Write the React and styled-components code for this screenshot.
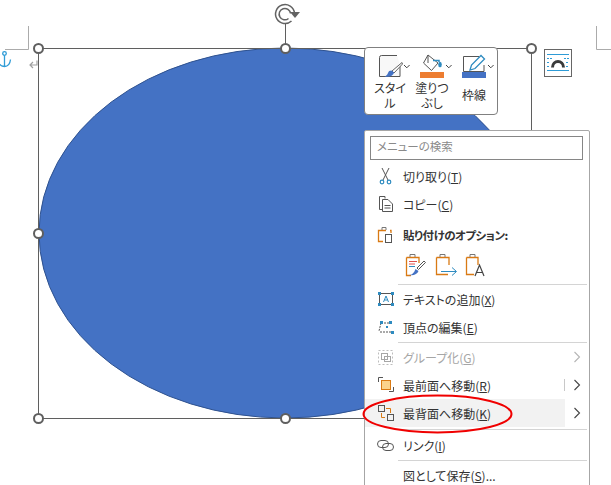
import React from "react";
import styled, { createGlobalStyle } from "styled-components";

const Global = createGlobalStyle`
	html, body {
		margin: 0;
		padding: 0;
		background: #fff;
		overflow: hidden;
	}
	body {
		font-family: "Noto Sans CJK JP", "Liberation Sans", sans-serif;
		font-feature-settings: "palt";
		color: #262626;
	}
`;

const Stage = styled.div`
	position: relative;
	width: 611px;
	height: 485px;
	overflow: hidden;
	background: #fff;
`;

const Drawing = styled.svg`
	position: absolute;
	left: 0;
	top: 0;
`;

const MiniToolbar = styled.div`
	position: absolute;
	left: 364px;
	top: 47px;
	width: 134px;
	height: 68px;
	box-sizing: border-box;
	background: #fff;
	border: 1px solid #808080;
	border-radius: 4px;
	display: flex;
	padding: 4px 0 0 4px;
`;

const ToolButton = styled.div`
	width: 42px;
	display: flex;
	flex-direction: column;
	align-items: center;
`;

const ToolLabel = styled.div`
	font-size: 12px;
	line-height: 15px;
	text-align: center;
	white-space: pre-line;
	margin-top: ${(p) => p.$top || 0}px;
	color: #333;
`;

const Menu = styled.div`
	position: absolute;
	left: 364px;
	top: 130px;
	width: 226px;
	height: 360px;
	box-sizing: border-box;
	background: #fff;
	border: 1px solid #a6a6a6;
	border-radius: 2px 2px 0 0;
	display: flex;
	flex-direction: column;
	padding-top: 5px;
`;

const SearchBox = styled.div`
	height: 24px;
	margin: 0 6px 2px 5px;
	box-sizing: border-box;
	border: 1px solid #868686;
	font-size: 11.5px;
	line-height: 18px;
	padding-left: 6px;
	color: #8a8a8a;
	flex: none;
`;

const Row = styled.div`
	height: ${(p) => p.$h || 28}px;
	flex: none;
	display: flex;
	align-items: center;
	font-size: ${(p) => (p.$bold ? 11.5 : 12)}px;
	letter-spacing: ${(p) => (p.$bold ? "-0.5px" : "normal")};
	color: ${(p) => (p.$disabled ? "#a6a6a6" : "#333")};
	font-weight: ${(p) => (p.$bold ? 700 : 400)};
`;

const Highlight = styled.div`
	display: flex;
	align-items: center;
	height: 100%;
	width: 200px;
	flex: none;
	position: relative;
	background: ${(p) => (p.$on ? "#f2f2f2" : "transparent")};
	box-sizing: border-box;

	${(p) =>
		p.$split &&
		`&::after {
			content: "";
			position: absolute;
			right: 0;
			top: 8px;
			bottom: 8px;
			width: 1px;
			background: #c8c8c8;
		}`}
`;

const IconCell = styled.div`
	width: 38px;
	height: 100%;
	flex: none;
	display: flex;
	align-items: center;
	padding-left: 12px;
	box-sizing: border-box;
`;

const Key = styled.span`
	text-decoration: underline;
	text-underline-offset: 1px;
`;

const Chevron = styled.div`
	width: 24px;
	display: flex;
	justify-content: center;
	flex: none;
`;

const Separator = styled.div`
	height: 1px;
	flex: none;
	margin-left: 33px;
	margin-right: 2px;
	background: #d4d4d4;
	margin-top: ${(p) => p.$top || 0}px;
	margin-bottom: ${(p) => p.$bottom || 0}px;
`;

const PasteIcons = styled.div`
	height: 26px;
	flex: none;
	display: flex;
	gap: 7px;
	padding-left: 40px;
	align-items: center;
`;

const Ico = ({ w = 18, h = 18, children }) => (
	<svg width={w} height={h} viewBox={`0 0 ${w} ${h}`} fill="none" style={{ display: "block" }}>
		{children}
	</svg>
);

const ChevronIcon = ({ color = "#444" }) => (
	<svg width="8" height="12" viewBox="0 0 8 12" fill="none">
		<path d="M1.500 1l5 5-5 5" stroke={color} strokeWidth="1.100" />
	</svg>
);

const handles = [
	[38.5, 48.5], [285.5, 48.5], [531.5, 48.5], [38.5, 233.5], [38.5, 418.5], [285.5, 418.5],
];

const Canvas = () => (
	<Drawing width="611" height="485" viewBox="0 0 611 485" fill="none">
		<path d="M5 49.500H28.500V26" stroke="#ababab" />
		<path d="M596.500 26V49.500H611" stroke="#ababab" />
		<ellipse cx="285" cy="233" rx="246" ry="185" fill="#4472c4" stroke="#2f528f" />
		<rect x="38.500" y="48.500" width="493" height="370" stroke="#5f5f5f" />
		<path d="M285.500 24V48" stroke="#5f5f5f" />
		{handles.map(([x, y]) => (
			<circle key={`${x}-${y}`} cx={x} cy={y} r="4.500" fill="#fff" stroke="#5f5f5f" strokeWidth="2" />
		))}
		{/* rotate handle */}
		<path d="M294.500 13a9.500 9.500 0 1 0-3 8M290.500 13.500a5.700 5.700 0 1 0-2 5" stroke="#636363" strokeWidth="1.500" />
		<path d="M290 12h10l-5 6z" fill="#636363" />
		{/* anchor */}
		<g stroke="#2e9bd6" strokeWidth="1.300">
			<circle cx="4.500" cy="53.500" r="1.800" />
			<path d="M4.500 55.500V66.500M-1.500 60c0 4 2.500 6.500 6 6.500s5.500-2.500 6-7" />
		</g>
		{/* paragraph mark */}
		<path d="M37 60.500V65H30M33 62l-3 3 3 3" stroke="#a0a0a0" strokeWidth="1.200" />
		{/* layout options */}
		<rect x="544.500" y="49.500" width="27" height="27" fill="#fff" stroke="#666" />
		<g stroke="#2e9bd6">
			<path d="M547 54.500H569M547 70.500H569" />
			<path d="M547 58.500h5M547 62.500h3M547 66.500h3M564 58.500h5M566 62.500h3M566 66.500h3" strokeDasharray="2 1" />
		</g>
		<path d="M552.500 67.500c0-8 11-8 11 0" stroke="#3a3a3a" strokeWidth="3" />
	</Drawing>
);

const Caret = ({ x }) => <path d={`M${x} 13l2.800 2.800L${x + 5.600} 13`} stroke="#444" />;

const Toolbar = () => (
	<MiniToolbar>
		<ToolButton>
			<Ico w={42} h={28}>
				<path d="M28 3.500H12.500a2 2 0 0 0-2 2V24.500H31V13" stroke="#555" fill="#f8f8f8" />
				<path d="M33 10.500L23 19l2 2 8.500-9z" fill="#fff" stroke="#666" />
				<path d="M22.500 18.500c-2 0-3 .8-3.500 2.500-.6 2-2 3-3.500 3.500 4 1 9-.6 9.500-4z" fill="#4472c4" />
				<Caret x={35} />
			</Ico>
			<ToolLabel>{"スタイ\nル"}</ToolLabel>
		</ToolButton>
		<ToolButton>
			<Ico w={42} h={28}>
				<path d="M17 3l-4.500 8 8 7.500L27 11z" stroke="#555" />
				<path d="M17 3v8" stroke="#555" />
				<path d="M22 8.500h6v1.500" stroke="#2e8bc0" strokeWidth="1.500" />
				<ellipse cx="29" cy="12.500" rx="1.800" ry="2.800" fill="#2e8bc0" />
				<rect x="9" y="20" width="24" height="6" fill="#ed7d31" />
				<Caret x={35} />
			</Ico>
			<ToolLabel>{"塗りつ\nぶし"}</ToolLabel>
		</ToolButton>
		<ToolButton>
			<Ico w={42} h={28}>
				<path d="M26 4.500H10.500V19.500H31V13" stroke="#555" />
				<path d="M17 18l1.500-5L28 3.500l3.500 3.500-9.500 9.500z" fill="#fff" stroke="#2e8bc0" strokeWidth="1.300" />
				<rect x="9" y="20" width="24" height="6" fill="#4472c4" />
				<Caret x={35} />
			</Ico>
			<ToolLabel $top={7}>枠線</ToolLabel>
		</ToolButton>
	</MiniToolbar>
);

const Item = ({ icon, label, k, suffix = "", disabled, arrow, hover, split }) => (
	<Row $disabled={disabled}>
		<Highlight $on={hover} $split={split}>
			<IconCell>{icon}</IconCell>
			<span>
				{label}(<Key>{k}</Key>){suffix}
			</span>
		</Highlight>
		{arrow && (
			<Chevron>
				<ChevronIcon color={disabled ? "#b5b5b5" : "#444"} />
			</Chevron>
		)}
	</Row>
);

const ContextMenu = () => (
	<Menu>
		<SearchBox>メニューの検索</SearchBox>
		<Item
			label="切り取り"
			k="T"
			icon={
				<Ico>
					<path d="M5 1l6 12M12 1L6 13" stroke="#555" />
					<circle cx="5" cy="15" r="1.800" stroke="#2e8bc0" strokeWidth="1.200" />
					<circle cx="12" cy="15" r="1.800" stroke="#2e8bc0" strokeWidth="1.200" />
				</Ico>
			}
		/>
		<Item
			label="コピー"
			k="C"
			icon={
				<Ico>
					<path d="M8 3.500V1.500H2.500V14.500H5" stroke="#555" />
					<path d="M5.500 4.500H11L15.500 9V16.500H5.500zM7.500 10.500h6M7.500 13h6" stroke="#555" />
				</Ico>
			}
		/>
		<Row $bold $h={34}>
			<IconCell>
				<Ico>
					<path d="M9 4.500H1.500V15.500H6M13 4.500h1V7" stroke="#d97a14" strokeWidth="1.300" />
					<path d="M5 4V1.500h4V4" stroke="#777" />
					<rect x="8.500" y="8.500" width="6" height="8" stroke="#555" />
				</Ico>
			</IconCell>
			貼り付けのオプション:
		</Row>
		<PasteIcons>
			<Ico w={23} h={24}>
				<path d="M1.500 4.500V22.500H6M14 10V4.500H1.500" stroke="#d97a14" strokeWidth="1.300" />
				<path d="M5 4V1.500h5V4" stroke="#777" />
				<path d="M4 8.500h8M4 11h6" stroke="#e0504c" />
				<path d="M4 13.500h6" stroke="#2e8bc0" />
				<path d="M12 15l7-7 1.500 1.500-7 7z" stroke="#555" />
				<path d="M4 22c3 0 5-2 6.500-6l3 2c-1 3-5 5-9.500 4z" fill="#4472c4" />
			</Ico>
			<Ico w={23} h={24}>
				<path d="M1.500 4.500V21.500H13M14 12V4.500H1.500" stroke="#d97a14" strokeWidth="1.300" />
				<path d="M5 4V1.500h5V4" stroke="#777" />
				<path d="M6 18.500H21M17 14.500l4.500 4-4.500 4" stroke="#2e8bc0" />
			</Ico>
			<Ico w={23} h={24}>
				<path d="M1.500 4.500V21.500H9M13 12V4.500H1.500" stroke="#d97a14" strokeWidth="1.300" />
				<path d="M5 4V1.500h5V4" stroke="#777" />
				<path d="M10 23l4.500-11L19 23M11.500 19.500h6" stroke="#444" strokeWidth="1.200" />
			</Ico>
		</PasteIcons>
		<Separator $top={6} />
		<Item
			label="テキストの追加"
			k="X"
			icon={
				<Ico>
					<rect x="2.500" y="3.500" width="13" height="11" stroke="#555" />
					<g fill="#2e8bc0">
						<rect x="1" y="2" width="3" height="3" />
						<rect x="14" y="2" width="3" height="3" />
						<rect x="1" y="13" width="3" height="3" />
						<rect x="14" y="13" width="3" height="3" />
					</g>
					<path d="M6.500 12l2.500-6 2.500 6M7.500 10h3" stroke="#2e8bc0" />
				</Ico>
			}
		/>
		<Item
			label="頂点の編集"
			k="E"
			icon={
				<Ico>
					<path d="M4 5L2 13M4 5h8M3 14h11" stroke="#555" strokeDasharray="2 1" />
					<g fill="#2e8bc0">
						<rect x="3" y="3" width="3" height="3" />
						<rect x="12" y="3" width="3" height="3" />
						<rect x="9" y="8" width="2" height="2" />
						<rect x="14" y="13" width="3" height="3" />
					</g>
				</Ico>
			}
		/>
		<Separator $top={1} />
		<Item
			disabled
			arrow
			label="グループ化"
			k="G"
			icon={
				<Ico>
					<rect x="1.500" y="2.500" width="14" height="14" stroke="#bdbdbd" strokeDasharray="2 2" />
					<rect x="4.500" y="5.500" width="6" height="6" stroke="#a6a6a6" />
					<rect x="7.500" y="8.500" width="6" height="5" stroke="#a6a6a6" />
				</Ico>
			}
		/>
		<Item
			arrow
			split
			label="最前面へ移動"
			k="R"
			icon={
				<Ico>
					<path d="M1.500 6V1.500H6M12 15.500h4.500V11" stroke="#555" />
					<rect x="4.500" y="4.500" width="9" height="9" fill="#fbd38d" stroke="#d97a14" />
				</Ico>
			}
		/>
		<Item
			arrow
			hover
			label="最背面へ移動"
			k="K"
			icon={
				<Ico>
					<rect x="1.500" y="1.500" width="6" height="6" stroke="#555" />
					<rect x="10.500" y="10.500" width="6" height="6" stroke="#555" />
					<path d="M9 4.500h4.500V9M8 13.500H4.500V9" stroke="#d97a14" />
				</Ico>
			}
		/>
		<Separator $top={2} $bottom={1} />
		<Item
			label="リンク"
			k="I"
			icon={
				<Ico>
					<rect x="0.500" y="4.500" width="11" height="7" rx="3.500" stroke="#555" />
					<rect x="5.500" y="7.500" width="11" height="7" rx="3.500" stroke="#555" />
				</Ico>
			}
		/>
		<Separator $top={1} />
		<Row>
			<IconCell />
			<span>
				図として保存(<Key>S</Key>)...
			</span>
		</Row>
	</Menu>
);

const RedMark = () => (
	<Drawing width="611" height="485" viewBox="0 0 611 485" fill="none">
		<ellipse cx="437.500" cy="414" rx="74" ry="18.500" stroke="#f00000" strokeWidth="2" />
	</Drawing>
);

const App = () => (
	<>
		<Global />
		<Stage>
			<Canvas />
			<Toolbar />
			<ContextMenu />
			<RedMark />
		</Stage>
	</>
);

export default App;
